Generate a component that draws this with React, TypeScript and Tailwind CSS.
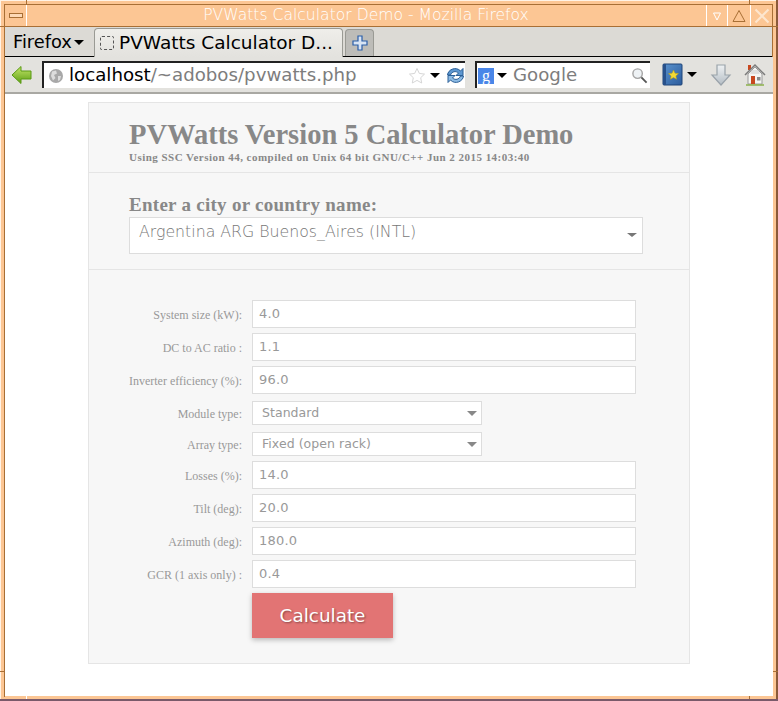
const serif = "font-['Liberation_Serif',serif]";

type Field = { label: string; value: string; select?: boolean };

const fields: Field[] = [
  { label: "System size (kW):", value: "4.0" },
  { label: "DC to AC ratio :", value: "1.1" },
  { label: "Inverter efficiency (%):", value: "96.0" },
  { label: "Module type:", value: "Standard", select: true },
  { label: "Array type:", value: "Fixed (open rack)", select: true },
  { label: "Losses (%):", value: "14.0" },
  { label: "Tilt (deg):", value: "20.0" },
  { label: "Azimuth (deg):", value: "180.0" },
  { label: "GCR (1 axis only) :", value: "0.4" },
];

function Caret({ className = "" }: { className?: string }) {
  return <span className={`h-0 w-0 border-x-[5px] border-t-[5px] border-x-transparent border-t-black ${className}`} />;
}

function TitleBar() {
  return (
    <div className="flex h-[23px] shrink-0 items-stretch border-y border-[#a86f35] bg-[#fcc694]">
      <div className="flex w-[22px] items-center justify-center border-r border-white">
        <span className="h-[5px] w-[14px] border border-[#a86f35] bg-[#fdd9b6]" />
      </div>
      <div className="flex-1 pr-[1px] text-center font-['DejaVu_Sans',sans-serif] text-[15.6px] leading-[20px] font-extralight text-white">
        PVWatts Calculator Demo - Mozilla Firefox
      </div>
      <div className="flex w-[22px] items-center justify-center border-x border-white">
        <svg width="10" height="10" viewBox="0 0 10 10" fill="none" stroke="#fff" strokeWidth="1">
          <path d="M1.5 2h7L5 9z" />
        </svg>
      </div>
      <div className="flex w-[22px] items-center justify-center">
        <svg width="14" height="14" viewBox="0 0 14 14" fill="none" stroke="#a86f35" strokeWidth="1">
          <path d="M7 1.5 13 12.5H1z" />
        </svg>
      </div>
      <div className="mr-[1px] flex w-[22px] items-center justify-center border-l border-white">
        <svg width="16" height="16" viewBox="0 0 16 16" fill="none" stroke="#fde6cf" strokeWidth="2">
          <path d="M1.5 1.5 14.5 14.5M14.5 1.5 1.5 14.5" />
        </svg>
      </div>
    </div>
  );
}

function TabBar() {
  return (
    <div className="flex h-[30px] shrink-0 items-end border-b border-black bg-[#dcdad5] font-['DejaVu_Sans',sans-serif] text-black">
      <div className="flex h-[28px] w-[89px] items-center gap-[2px] pl-[8px] text-[17.8px]">
        Firefox
        <Caret className="mt-[1px]" />
      </div>
      <div className="-mb-px flex h-[29px] w-[249px] items-center gap-[5px] rounded-t-[4px] border border-b-0 border-[#9a9a94] bg-[linear-gradient(#efeeea,#e3e2de)] pl-[5px] text-[18.5px] whitespace-nowrap">
        <span className="h-[14px] w-[14px] shrink-0 rounded-[2px] border border-dashed border-[#555]" />
        PVWatts Calculator D...
      </div>
      <div className="ml-[2px] flex h-[27px] w-[29px] items-center justify-center rounded-t-[4px] border border-b-0 border-[#9a9a94] bg-[#bdbcb8]">
        <svg width="16" height="16" viewBox="0 0 16 16">
          <path d="M6 1h4v5h5v4h-5v5H6v-5H1V6h5z" fill="#d8e4f4" stroke="#2a5ea8" strokeWidth="1.2" />
        </svg>
      </div>
    </div>
  );
}

function NavBar() {
  return (
    <div className="flex h-[37px] shrink-0 items-center border-b-2 border-[#a9a8a3] bg-[#e3e2de] font-['DejaVu_Sans',sans-serif]">
      <svg className="ml-[2px] shrink-0" width="26" height="24" viewBox="0 0 26 24">
        <defs>
          <linearGradient id="back" x1="0" y1="0" x2="0" y2="1">
            <stop offset="0" stopColor="#c4e66a" />
            <stop offset="1" stopColor="#5c9e12" />
          </linearGradient>
          <linearGradient id="down" x1="0" y1="0" x2="0" y2="1">
            <stop offset="0" stopColor="#eef1f3" />
            <stop offset="1" stopColor="#b4bdc4" />
          </linearGradient>
          <linearGradient id="book" x1="0" y1="0" x2="1" y2="1">
            <stop offset="0" stopColor="#5a93cf" />
            <stop offset="1" stopColor="#2c5c9c" />
          </linearGradient>
        </defs>
        <path d="M5 12 14 3.500V8h10v8H14v4.500z" fill="url(#back)" stroke="#5a9a14" strokeWidth="1" />
      </svg>

      <div className="ml-[9px] flex h-[27px] w-[423px] shrink-0 items-center border-t-2 border-l-2 border-t-[#222] border-l-[#222] bg-white">
        <svg className="ml-[4px] shrink-0" width="16" height="16" viewBox="0 0 16 16">
          <circle cx="8" cy="8" r="7" fill="#a8a8a8" />
          <path d="M4 3.500 8 2.500 9 5.500 6 7 7.500 10 5 12.500 3 8zM10 8h3l-1 4-2 1z" fill="#dcdcdc" />
        </svg>
        <span className="ml-[5px] text-[18.2px] leading-none text-black">localhost</span>
        <span className="text-[18.2px] leading-none text-[#7d7d7d]">/~adobos/pvwatts.php</span>
        <svg className="ml-[51px] shrink-0" width="18" height="18" viewBox="0 0 18 18">
          <path d="m9 1.500 2.300 4.900 5.200.7-3.800 3.600 1 5.300L9 13.400 4.300 16l1-5.300L1.500 7.100l5.200-.7z" fill="#fff" stroke="#d6d6d6" strokeWidth="1" />
        </svg>
        <Caret className="ml-[4px]" />
        <svg className="ml-[6px] shrink-0" width="19" height="19" viewBox="0 0 19 19">
          <path d="M1.500 9C2 3.500 10 0 14.500 5L17 2.500V9.500h-7L12.500 7C9.500 4.500 6 5.500 4.500 9z" fill="#5d97d0" stroke="#2a5e96" />
          <path d="M17.500 10C17 15.500 9 19 4.500 14L2 16.500V9.500h7L6.500 12c3 2.500 6.500 1.500 8-2z" fill="#8dbbe4" stroke="#2a5e96" />
        </svg>
      </div>

      <div className="ml-[10px] flex h-[27px] w-[175px] shrink-0 items-center border-t-2 border-l-2 border-t-[#222] border-l-[#222] bg-white">
        <span className="ml-[1px] flex h-[16px] w-[16px] items-center justify-center bg-[#4a86e8] font-['Liberation_Serif',serif] text-[16px] leading-none text-white">
          g
        </span>
        <Caret className="ml-[3px]" />
        <span className="ml-[6px] flex-1 text-[18.2px] leading-none text-[#7d7d7d]">Google</span>
        <svg className="mr-[2px] shrink-0" width="17" height="17" viewBox="0 0 18 18" fill="none">
          <circle cx="7" cy="7" r="5" fill="#eef2f5" stroke="#a5a5a5" strokeWidth="1.500" />
          <path d="m11 11 5.500 5.500" stroke="#555" strokeWidth="2" />
        </svg>
      </div>

      <svg className="ml-[12px] shrink-0" width="21" height="23" viewBox="0 0 21 23">
        <rect x="1" y="1" width="19" height="21" rx="1" fill="url(#book)" stroke="#1f4478" />
        <rect x="1" y="1" width="3" height="21" fill="#27508a" />
        <path d="m11.500 7 1.500 3.200 3.500.4-2.600 2.300.7 3.400-3.100-1.700-3.100 1.700.7-3.400-2.600-2.300 3.500-.4z" fill="#f2d934" stroke="#b89c14" strokeWidth=".5" />
      </svg>
      <Caret className="ml-[4px]" />
      <svg className="ml-[13px] shrink-0" width="22" height="24" viewBox="0 0 22 24">
        <path d="M7 2h8v10h5L11 22 2 12h5z" fill="url(#down)" stroke="#9aa3aa" strokeWidth="1.200" />
      </svg>
      <svg className="ml-[12px] shrink-0" width="22" height="24" viewBox="0 0 22 24">
        <rect x="4" y="2" width="3" height="5" fill="#c8471f" />
        <path d="M1 12 11 2l10 10" fill="none" stroke="#7a7a7a" strokeWidth="1.500" />
        <path d="M4 11 11 4l7 7v10H4z" fill="#f4f4f2" stroke="#9a9a9a" />
        <path d="M7 8h8M6.500 10h9" stroke="#c9c9c9" strokeWidth="1" />
        <rect x="7" y="13" width="4" height="8" fill="#c8471f" />
        <rect x="13" y="14" width="3.500" height="3.500" fill="#8a8a8a" />
        <path d="M2 22h18" stroke="#8bb04a" strokeWidth="1.500" />
      </svg>
    </div>
  );
}

function FormRow({ field }: { field: Field }) {
  return (
    <div className={`mb-[5px] flex items-center ${field.select ? "mt-[2px] h-[24px]" : "h-[28px]"}`}>
      <label className={`${serif} w-[153px] pt-[1px] text-right text-[12px] whitespace-nowrap text-[#999]`}>{field.label}</label>
      {field.select ? (
        <div className="ml-[10px] flex h-full w-[230px] items-center justify-between border border-[#ddd] bg-white pr-[4px] pl-[9px] font-['DejaVu_Sans',sans-serif] text-[12.5px] tracking-[0.05px] text-[#999]">
          {field.value}
          <span className="h-0 w-0 border-x-[5px] border-t-[5px] border-x-transparent border-t-[#888]" />
        </div>
      ) : (
        <div className="ml-[10px] flex h-full w-[384px] items-center border border-[#ddd] bg-white pl-[6px] font-['DejaVu_Sans',sans-serif] text-[13px] tracking-[0.2px] text-[#999]">
          {field.value}
        </div>
      )}
    </div>
  );
}

export default function App() {
  return (
    <div className="relative flex h-[701px] w-[778px] flex-col border-x-[5px] border-t-[4px] border-b-[5px] border-x-[#fcc694] border-t-[#fcc694] border-b-[#fcc694] bg-white">
      <TitleBar />
      <TabBar />
      <NavBar />

      <main className="min-h-0 flex-1 bg-white pt-[8px] pl-[83px]">
        <div className="h-[562px] w-[602px] border border-[#e5e5e5] bg-[#f7f7f7]">
          <div className={`${serif} h-[70px] border-b border-[#e5e5e5] pt-[16px] pl-[40px] font-bold text-[#888]`}>
            <h1 className="text-[28.5px] leading-[32px]">PVWatts Version 5 Calculator Demo</h1>
            <p className="text-[11px] leading-[12px] tracking-[0.47px]">
              Using SSC Version 44, compiled on Unix 64 bit GNU/C++ Jun 2 2015 14:03:40
            </p>
          </div>

          <div className="h-[97px] border-b border-[#e5e5e5] pt-[21px] pl-[40px]">
            <h2 className={`${serif} mb-px text-[19px] leading-[22px] font-bold tracking-[0.27px] text-[#888]`}>
              Enter a city or country name:
            </h2>
            <div className="relative h-[37px] w-[514px] border border-[#ddd] bg-white pt-[4px] pl-[9px] font-['DejaVu_Sans',sans-serif] text-[15.75px] leading-[20px] font-extralight text-[#777]">
              Argentina ARG Buenos_Aires (INTL)
              <span className="absolute top-[15px] right-[5px] h-0 w-0 border-x-[5px] border-t-[4px] border-x-transparent border-t-[#777]" />
            </div>
          </div>

          <div className="flex flex-col items-start pt-[30px]">
            {fields.map((field) => (
              <FormRow key={field.label} field={field} />
            ))}
            <button className="ml-[163px] h-[45px] w-[141px] bg-[#e27474] font-['DejaVu_Sans',sans-serif] text-[18.4px] text-white shadow-[0_2px_5px_rgba(0,0,0,0.25)] [text-shadow:1px_1px_2px_rgba(0,0,0,0.4)]">
              Calculate
            </button>
          </div>
        </div>
      </main>

      {/* window frame details that sit over the border */}
      <span className="absolute top-[-4px] right-[-5px] left-[-5px] h-px bg-[#fff3e6]" />
      <span className="absolute top-[-4px] bottom-[-5px] left-[-5px] w-px bg-[#fff3e6]" />
      <span className="absolute top-0 bottom-[-1px] left-[-1px] w-px bg-[#a86f35]" />
      <span className="absolute top-0 right-[0px] h-[53px] w-px bg-[#a86f35]" />
      <span className="absolute top-[-4px] right-[-5px] bottom-[-3px] w-[2px] bg-[#8a5a3a]" />
      <span className="absolute right-[-5px] bottom-[-5px] left-[-5px] h-[2px] bg-[#7a5a6a]" />
      <span className="absolute top-[-4px] left-[21px] h-[5px] w-px bg-[#a86f35]" />
      <span className="absolute top-[-4px] right-[23px] h-[5px] w-px bg-[#a86f35]" />
      <span className="absolute top-[22px] left-[-5px] h-px w-[5px] bg-[#a86f35]" />
      <span className="absolute top-[22px] right-[-5px] h-px w-[5px] bg-[#a86f35]" />
      <span className="absolute bottom-[-3px] left-[21px] h-[3px] w-px bg-white" />
      <span className="absolute right-[23px] bottom-[-3px] h-[3px] w-px bg-[#a86f35]" />
      <span className="absolute bottom-[24px] left-[-5px] h-px w-[5px] bg-[#a86f35]" />
      <span className="absolute right-[-5px] bottom-[24px] h-px w-[5px] bg-[#a86f35]" />
    </div>
  );
}
